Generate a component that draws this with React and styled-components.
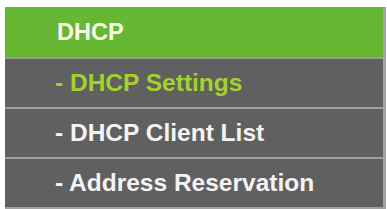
import React from 'react';
import styled, { createGlobalStyle } from 'styled-components';

const GlobalStyle = createGlobalStyle`
  html, body {
    margin: 0;
    padding: 0;
    background: #ffffff;
  }
  body {
    font-family: "Liberation Sans", Arial, sans-serif;
  }
`;

const Menu = styled.nav`
  margin: 7px 0 0 5px;
  width: 378px;
  border-right: 3px solid #a3a3a3;
  display: flex;
  flex-direction: column;
`;

const Header = styled.div`
  height: 50px;
  display: flex;
  align-items: center;
  padding-left: 52px;
  background: #66b832;
  border-bottom: 2px solid #979b93;
  color: #f7fbef;
  font-size: 23.5px;
  font-weight: 700;
  transform-origin: left center;
`;

const Item = styled.a`
  height: 48px;
  display: flex;
  align-items: center;
  padding-left: 50px;
  background: #606060;
  border-bottom: 2px solid #a0a0a0;
  color: ${(props) => (props.active ? '#a4d22c' : '#f4f4f4')};
  font-size: 24.5px;
  font-weight: 700;
  text-decoration: none;
  cursor: pointer;
`;

const items = [
  { label: 'DHCP Settings', active: true },
  { label: 'DHCP Client List' },
  { label: 'Address Reservation' },
];

function App() {
  return (
    <>
      <GlobalStyle />
      <Menu>
        <Header>DHCP</Header>
        {items.map((item) => (
          <Item key={item.label} active={item.active}>
            - {item.label}
          </Item>
        ))}
      </Menu>
    </>
  );
}

export default App;
